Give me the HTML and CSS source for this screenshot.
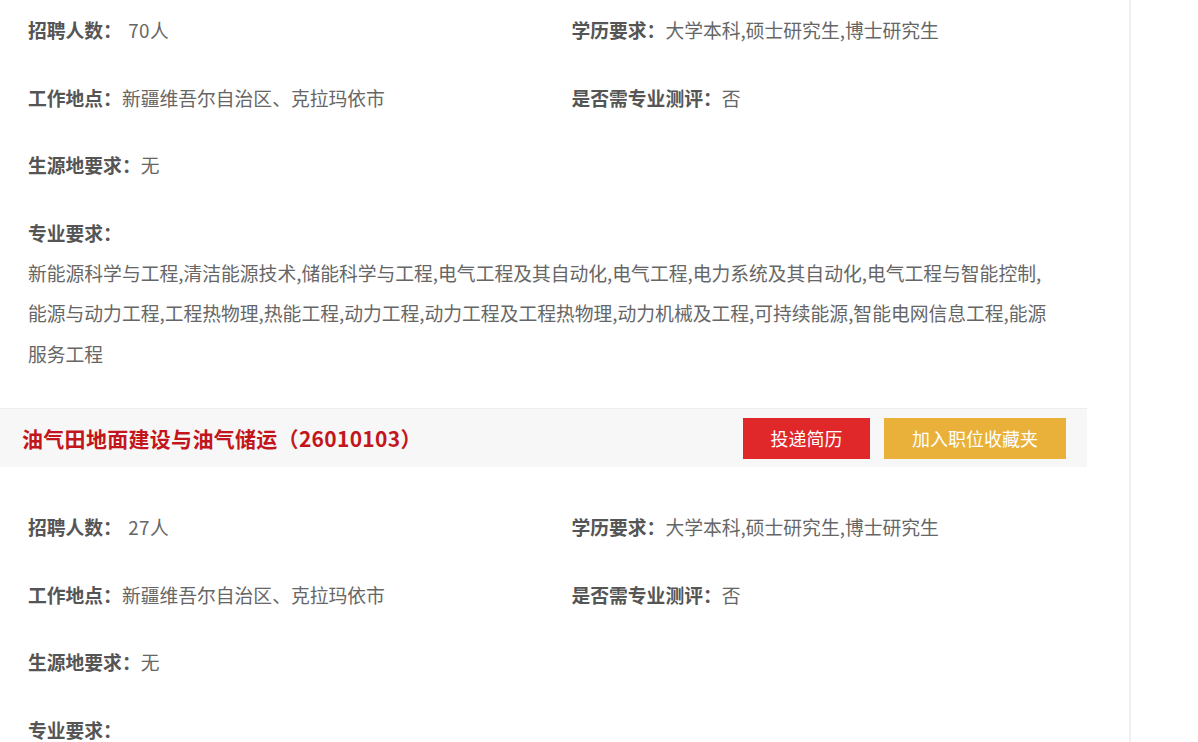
FILE: index.html
```html
<!DOCTYPE html>
<html lang="zh-CN">
<head>
    <meta charset="UTF-8">
    <meta name="viewport" content="width=device-width, initial-scale=1.0">
    <title>职位详情</title>
    <link rel="stylesheet" href="styles.css">
</head>
<body>
    <div class="page">
        <div class="main">
            <div class="job-info first">
                <div class="info-grid">
                    <div class="item"><span class="label">招聘人数：</span> <span class="num">70人</span></div>
                    <div class="item"><span class="label">学历要求：</span>大学本科,硕士研究生,博士研究生</div>
                    <div class="item"><span class="label">工作地点：</span>新疆维吾尔自治区、克拉玛依市</div>
                    <div class="item"><span class="label">是否需专业测评：</span>否</div>
                    <div class="item"><span class="label">生源地要求：</span>无</div>
                </div>
                <div class="item major"><span class="label">专业要求：</span></div>
                <div class="major-list">新能源科学与工程,清洁能源技术,储能科学与工程,电气工程及其自动化,电气工程,电力系统及其自动化,电气工程与智能控制,能源与动力工程,工程热物理,热能工程,动力工程,动力工程及工程热物理,动力机械及工程,可持续能源,智能电网信息工程,能源服务工程</div>
            </div>

            <div class="job-bar">
                <div class="job-title">油气田地面建设与油气储运（26010103）</div>
                <button class="btn btn-apply">投递简历</button>
                <button class="btn btn-collect">加入职位收藏夹</button>
            </div>

            <div class="job-info">
                <div class="info-grid">
                    <div class="item"><span class="label">招聘人数：</span> <span class="num">27人</span></div>
                    <div class="item"><span class="label">学历要求：</span>大学本科,硕士研究生,博士研究生</div>
                    <div class="item"><span class="label">工作地点：</span>新疆维吾尔自治区、克拉玛依市</div>
                    <div class="item"><span class="label">是否需专业测评：</span>否</div>
                    <div class="item"><span class="label">生源地要求：</span>无</div>
                </div>
                <div class="item major"><span class="label">专业要求：</span></div>
                <div class="major-list">油气储运工程,石油工程,化学工程与工艺,过程装备与控制工程,机械工程,安全工程,土木工程</div>
            </div>
        </div>
        <div class="sidebar"></div>
    </div>
</body>
</html>
```

FILE: styles.css
```css
body {
    margin: 0;
    font-family: "Microsoft YaHei", "Noto Sans CJK SC", sans-serif;
    background: #fff;
    color: #666;
    overflow: hidden;
}
.page {
    display: flex;
    min-height: 742px;
}
.main {
    width: 1087px;
    flex-shrink: 0;
}
.sidebar {
    flex: 1;
    margin-left: 42px;
    border-left: 2px solid #f0f0f0;
}
.job-info {
    padding: 48px 28px 34px;
}
.job-info.first {
    padding-top: 18px;
}
.info-grid {
    display: grid;
    grid-template-columns: 1fr 1fr;
    column-gap: 56px;
    row-gap: 43.6px;
}
.item {
    font-size: 18.8px;
    line-height: 24px;
    white-space: nowrap;
}
.label {
    font-weight: bold;
    color: #555;
}
.num {
    margin-left: 2px;
    letter-spacing: 0.5px;
}
.major {
    margin-top: 43.6px;
}
.major-list {
    margin-top: 8px;
    font-size: 18.8px;
    line-height: 40.5px;
}
.job-bar {
    display: flex;
    align-items: center;
    gap: 14px;
    height: 58px;
    padding: 0 21px 0 22px;
    background: #f7f7f7;
    border-top: 1px solid #ededed;
}
.job-title {
    flex: 1;
    font-size: 21px;
    font-weight: bold;
    letter-spacing: 0.3px;
    color: #c3161c;
}
.btn {
    height: 41px;
    border: none;
    color: #fff;
    font-family: inherit;
    font-size: 18px;
    cursor: pointer;
}
.btn-apply {
    width: 127px;
    background: #e0282a;
}
.btn-collect {
    width: 182px;
    background: #e9b13a;
}
```
